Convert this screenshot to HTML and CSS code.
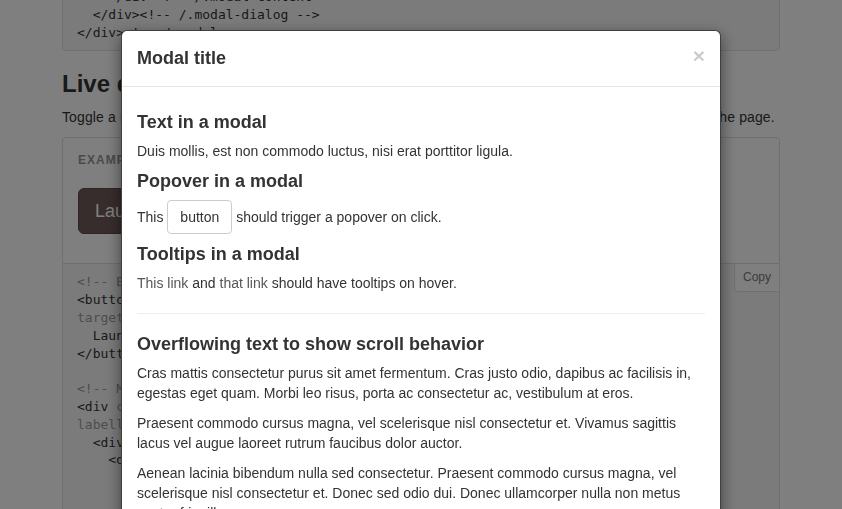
FILE: index.html
```html
<!DOCTYPE html>
<html lang="en">
<head>
<meta charset="utf-8">
<title>Modal</title>
<link rel="stylesheet" href="styles.css">
</head>
<body>
<div class="container">
  <pre class="code-top">    &lt;/div&gt;&lt;!-- /.modal-content --&gt;
  &lt;/div&gt;&lt;!-- /.modal-dialog --&gt;
&lt;/div&gt;&lt;!-- /.modal --&gt;</pre>

  <h3 class="section-title">Live demo</h3>
  <p class="lead-text">Toggle a modal via JavaScript by clicking the button below. It will slide down and fade in from the top of the page.</p>

  <div class="example">
    <span class="example-label">Example</span>
    <button class="btn-launch" type="button">Launch demo modal</button>
  </div>
  <div class="highlight">
    <button class="btn-copy" type="button">Copy</button>
<pre class="code"><span class="c">&lt;!-- Button trigger modal --&gt;</span>
&lt;button <span class="a">type=</span><span class="s">"button"</span> <span class="a">class=</span><span class="s">"btn btn-primary btn-lg"</span> <span class="a">data-toggle=</span><span class="s">"modal"</span> <span class="a">data-</span>
<span class="a">target=</span><span class="s">"#myModal"</span>&gt;
  Launch demo modal
&lt;/button&gt;

<span class="c">&lt;!-- Modal --&gt;</span>
&lt;div <span class="a">class=</span><span class="s">"modal fade"</span> <span class="a">id=</span><span class="s">"myModal"</span> <span class="a">tabindex=</span><span class="s">"-1"</span> <span class="a">role=</span><span class="s">"dialog"</span> <span class="a">aria-</span>
<span class="a">labelledby=</span><span class="s">"myModalLabel"</span>&gt;
  &lt;div <span class="a">class=</span><span class="s">"modal-dialog"</span> <span class="a">role=</span><span class="s">"document"</span>&gt;
    &lt;div <span class="a">class=</span><span class="s">"modal-content"</span>&gt;
      &lt;div <span class="a">class=</span><span class="s">"modal-header"</span>&gt;
        &lt;button <span class="a">type=</span><span class="s">"button"</span> <span class="a">class=</span><span class="s">"close"</span>&gt;</pre>
  </div>
</div>

<div class="backdrop"></div>

<div class="modal">
  <div class="modal-dialog">
    <div class="modal-content">
      <div class="modal-header">
        <span class="close">×</span>
        <h4 class="modal-title">Modal title</h4>
      </div>
      <div class="modal-body">
        <h4>Text in a modal</h4>
        <p>Duis mollis, est non commodo luctus, nisi erat porttitor ligula.</p>

        <h4>Popover in a modal</h4>
        <p>This <button class="btn-default" type="button">button</button> should trigger a popover on click.</p>

        <h4>Tooltips in a modal</h4>
        <p><a href="#">This link</a> and <a href="#">that link</a> should have tooltips on hover.</p>

        <hr>

        <h4>Overflowing text to show scroll behavior</h4>
        <p>Cras mattis consectetur purus sit amet fermentum. Cras justo odio, dapibus ac facilisis in, egestas eget quam. Morbi leo risus, porta ac consectetur ac, vestibulum at eros.</p>
        <p>Praesent commodo cursus magna, vel scelerisque nisl consectetur et. Vivamus sagittis lacus vel augue laoreet rutrum faucibus dolor auctor.</p>
        <p>Aenean lacinia bibendum nulla sed consectetur. Praesent commodo cursus magna, vel scelerisque nisl consectetur et. Donec sed odio dui. Donec ullamcorper nulla non metus auctor fringilla.</p>
        <p>Cras mattis consectetur purus sit amet fermentum. Cras justo odio, dapibus ac facilisis in, egestas eget quam. Morbi leo risus, porta ac consectetur ac, vestibulum at eros.</p>
      </div>
    </div>
  </div>
</div>
</body>
</html>
```
FILE: styles.css
```css
* { box-sizing: border-box; }

html, body {
  margin: 0;
  padding: 0;
  height: 100%;
  overflow: hidden;
}

body {
  font-family: "Liberation Sans", Arial, sans-serif;
  font-size: 14px;
  line-height: 20px;
  color: #333;
  background: #fff;
}

.container {
  width: 718px;
  margin: 0 auto;
}

pre {
  font-family: "DejaVu Sans Mono", "Liberation Mono", monospace;
  font-size: 13px;
  line-height: 17.8px;
  margin: 0;
  color: #333;
  white-space: pre;
  overflow: hidden;
}

.code-top {
  margin-top: -22px;
  padding: 9px 14px;
  background: #f7f7f9;
  border: 1px solid #e1e1e8;
  border-radius: 4px;
}

.c { color: #999; }
.a { color: #9a9a9a; }
.s { color: #777; }

.section-title {
  font-size: 24px;
  font-weight: bold;
  line-height: 26px;
  margin: 20px 0 10px;
  color: #333;
}

.lead-text {
  margin: 0 0 10px;
  letter-spacing: 0.12px;
}

.example {
  position: relative;
  border: 1px solid #ddd;
  border-radius: 4px 4px 0 0;
  padding: 50px 15px 29px;
}

.example-label {
  position: absolute;
  top: 15px;
  left: 15px;
  font-size: 12px;
  line-height: 14px;
  font-weight: bold;
  color: #959595;
  text-transform: uppercase;
  letter-spacing: 1px;
}

.btn-launch {
  font-family: inherit;
  font-size: 18px;
  line-height: 24px;
  padding: 10px 16px;
  color: #fff;
  background: #6f5a5a;
  border: 1px solid #5f4a4a;
  border-radius: 6px;
}

.highlight {
  position: relative;
  border: 1px solid #e1e1e8;
  border-top: 0;
  border-radius: 0 0 4px 4px;
  background: #f7f7f9;
  padding: 9px 14px;
}

.btn-copy {
  position: absolute;
  top: 0;
  right: 0;
  font-family: inherit;
  font-size: 12px;
  line-height: 16px;
  padding: 5px 8px 6px;
  color: #767676;
  background: #fff;
  border: 1px solid #e1e1e8;
  border-top: 0;
  border-right: 0;
  border-radius: 0 0 0 4px;
}

.backdrop {
  position: fixed;
  inset: 0;
  background: rgba(0, 0, 0, 0.5);
}

.modal {
  position: fixed;
  inset: 0;
}

.modal-dialog {
  width: 600px;
  margin: 30px auto;
}

.modal-content {
  background: #fff;
  border: 1px solid rgba(0, 0, 0, 0.75);
  border-radius: 6px;
  box-shadow: 0 5px 15px rgba(0, 0, 0, 0.5);
}

.modal-header {
  padding: 15px;
  border-bottom: 1px solid #e5e5e5;
}

.close {
  float: right;
  font-size: 21px;
  font-weight: bold;
  line-height: 21px;
  color: #000;
  opacity: 0.2;
  margin-top: -1px;
}

.modal-title {
  margin: 0;
  font-size: 18px;
  line-height: 25px;
  font-weight: bold;
}

.modal-body {
  padding: 15px;
}

.modal-body h4 {
  font-size: 18px;
  font-weight: bold;
  line-height: 20px;
  margin: 10px 0 9px;
}

.modal-body p {
  margin: 0 0 10px;
}

.modal-body a {
  color: #5a5555;
  text-decoration: none;
}

.btn-default {
  font-family: inherit;
  font-size: 14px;
  line-height: 20px;
  padding: 6px 12px;
  color: #333;
  background: #fff;
  border: 1px solid #ccc;
  border-radius: 4px;
}

hr {
  margin: 20px 0;
  border: 0;
  border-top: 1px solid #eee;
}
```
